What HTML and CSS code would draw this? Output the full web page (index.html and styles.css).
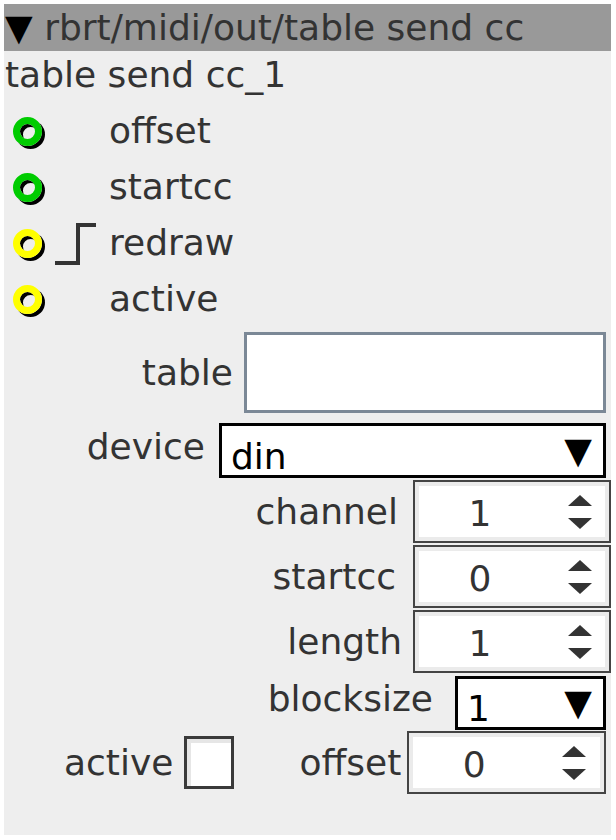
FILE: index.html
```html
<!DOCTYPE html>
<html lang="en">
<head>
  <meta charset="UTF-8" />
  <title>table send cc</title>
  <link rel="stylesheet" href="styles.css">
</head>
<body>
  <div class="node">
    <div class="title"><span class="caret">▼</span> rbrt/midi/out/table send cc</div>
    <div class="name">table send cc_1</div>

    <!-- inlets -->
    <ul class="inlets">
      <li class="inlet"><span class="pin pin-green"></span><span class="mark"></span><span class="pin-label">offset</span></li>
      <li class="inlet"><span class="pin pin-green"></span><span class="mark"></span><span class="pin-label">startcc</span></li>
      <li class="inlet">
        <span class="pin pin-yellow"></span>
        <span class="mark">
          <svg width="70" height="56" viewBox="0 0 70 56"><path d="M16 48 H39 V10 H57" fill="none" stroke="#333" stroke-width="4"/></svg>
        </span>
        <span class="pin-label">redraw</span>
      </li>
      <li class="inlet"><span class="pin pin-yellow"></span><span class="mark"></span><span class="pin-label">active</span></li>
    </ul>

    <!-- attributes -->
    <div class="attrs">
      <div class="attr attr-table">
        <label class="label">table</label>
        <div class="entry"></div>
      </div>
      <div class="attr attr-device">
        <label class="label label-up">device</label>
        <div class="select select-device"><span class="select-text">din</span><span class="select-arrow">▼</span></div>
      </div>
      <div class="attr attr-num">
        <label class="label">channel</label>
        <div class="spin"><span class="spin-value">1</span><span class="steps"><i class="up"></i><i class="down"></i></span></div>
      </div>
      <div class="attr attr-num">
        <label class="label label-startcc">startcc</label>
        <div class="spin"><span class="spin-value">0</span><span class="steps"><i class="up"></i><i class="down"></i></span></div>
      </div>
      <div class="attr attr-num">
        <label class="label label-length">length</label>
        <div class="spin"><span class="spin-value">1</span><span class="steps"><i class="up"></i><i class="down"></i></span></div>
      </div>
      <div class="attr attr-block">
        <label class="label label-up">blocksize</label>
        <div class="select select-block"><span class="select-text">1</span><span class="select-arrow">▼</span></div>
      </div>
      <div class="attr attr-bottom">
        <div class="group group-active">
          <label class="label">active</label>
          <span class="check"></span>
        </div>
        <div class="group group-offset">
          <label class="label">offset</label>
          <div class="spin spin-offset"><span class="spin-value">0</span><span class="steps"><i class="up"></i><i class="down"></i></span></div>
        </div>
      </div>
    </div>
  </div>
</body>
</html>
```

FILE: styles.css
```css
* { margin: 0; padding: 0; box-sizing: border-box; }

body {
  background: #fff;
  font-family: 'DejaVu Sans', sans-serif;
  font-size: 36px;
  color: #333;
}

.node {
  margin: 4px 5px 0 4px;
  width: 607px;
  height: 831px;
  background: #eee;
}

.title {
  height: 47px;
  line-height: 47px;
  background: #999;
  padding-left: 1px;
  white-space: nowrap;
}

.caret {
  color: #000;
}

.name {
  line-height: 47px;
  margin-bottom: 5px;
  padding-left: 1px;
}

/* inlets */
.inlets {
  list-style: none;
}

.inlet {
  display: flex;
  align-items: center;
  height: 56px;
}

.pin {
  width: 29px;
  height: 29px;
  margin-left: 9px;
  margin-right: -3px;
  border-radius: 50%;
  border: 7px solid #0c0;
  box-shadow: 3px 3px 0 #000, inset 3px 3px 0 #000;
}

.pin-yellow {
  border-color: #ff0;
}

.mark {
  width: 70px;
  height: 56px;
  display: block;
}

.mark svg {
  display: block;
}

.pin-label {
  line-height: 42px;
}

/* attributes */
.attr {
  display: flex;
  justify-content: flex-end;
  align-items: center;
}

.label {
  line-height: 42px;
}

.label-up {
  padding-bottom: 8px;
}

.attr-table {
  margin-top: 5px;
  padding-right: 5px;
  gap: 11px;
}

.entry {
  width: 362px;
  height: 81px;
  background: #fff;
  border: 3px solid #7b8896;
}

.attr-device {
  margin-top: 10px;
  padding-right: 5px;
  gap: 14px;
}

.select {
  display: flex;
  justify-content: space-between;
  align-items: center;
  background: #fff;
  border: 3px solid #000;
  color: #000;
  padding: 0 11px 0 9px;
}

.select-text {
  line-height: 42px;
  padding-top: 12px;
}

.select-arrow {
  line-height: 42px;
}

.select-device {
  width: 387px;
  height: 55px;
}

.attr-num {
  margin-top: 2px;
  gap: 15px;
}

.label-startcc {
  margin-right: 2px;
}

.label-length {
  margin-right: -4px;
}

.spin {
  display: flex;
  align-items: center;
  width: 198px;
  height: 63px;
  background: #fff;
  border: 2px solid #444;
  box-shadow: inset 0 0 0 4px #ebebeb;
}

.spin-value {
  width: 130px;
  text-align: center;
  line-height: 42px;
  padding-top: 4px;
}

.steps {
  display: flex;
  flex-direction: column;
  gap: 12px;
  margin-left: 23px;
}

.steps i {
  display: block;
  width: 0;
  height: 0;
  border-left: 12px solid transparent;
  border-right: 12px solid transparent;
}

.steps .up {
  border-bottom: 11px solid #333;
}

.steps .down {
  border-top: 11px solid #333;
}

.attr-block {
  margin-top: 3px;
  padding-right: 5px;
  gap: 22px;
}

.select-block {
  width: 151px;
  height: 54px;
}

.attr-bottom {
  margin-top: 1px;
  justify-content: flex-start;
  padding-left: 60px;
}

.group {
  display: flex;
  align-items: center;
}

.group-active {
  gap: 11px;
}

.check {
  width: 50px;
  height: 53px;
  background: #fff;
  border: 3px solid #3a3a3a;
  box-shadow: inset 4px 4px 0 #e6e6e6;
}

.group-offset {
  margin-left: 65px;
  gap: 6px;
}

.spin-offset {
  width: 199px;
}
```
